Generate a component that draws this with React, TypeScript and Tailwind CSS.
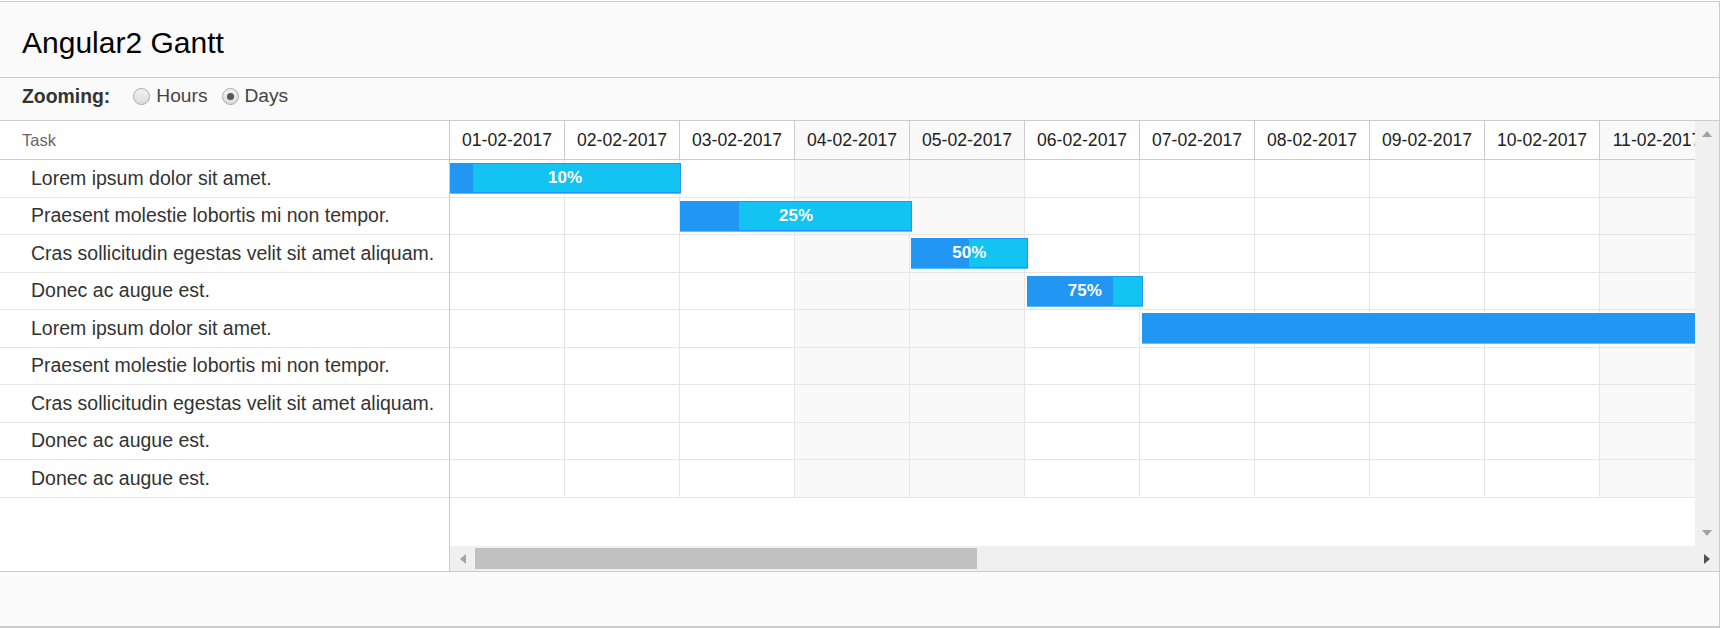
import { useState } from 'react';

// Gantt task row
type Task = {
  name: string;
  start?: number;
  days?: number;
  progress?: number;
  label?: string;
};

const dates: string[] = [
  '01-02-2017', '02-02-2017', '03-02-2017', '04-02-2017', '05-02-2017', '06-02-2017',
  '07-02-2017', '08-02-2017', '09-02-2017', '10-02-2017', '11-02-2017',
];

// sat/sun columns get a grey background
const weekend = [3, 4, 10];

const tasks: Task[] = [
  { name: 'Lorem ipsum dolor sit amet.', start: 0, days: 2, progress: 10, label: '10%' },
  { name: 'Praesent molestie lobortis mi non tempor.', start: 2, days: 2, progress: 25, label: '25%' },
  { name: 'Cras sollicitudin egestas velit sit amet aliquam.', start: 4, days: 1, progress: 50, label: '50%' },
  { name: 'Donec ac augue est.', start: 5, days: 1, progress: 75, label: '75%' },
  { name: 'Lorem ipsum dolor sit amet.', start: 6, days: 12, progress: 100 },
  { name: 'Praesent molestie lobortis mi non tempor.' },
  { name: 'Cras sollicitudin egestas velit sit amet aliquam.' },
  { name: 'Donec ac augue est.' },
  { name: 'Donec ac augue est.' },
];

const BAR_DAY = 115.5;

const Radio: React.FC<{ checked: boolean; label: string; onClick: () => void }> = ({ checked, label, onClick }) => (
  <label onClick={onClick} className="flex items-center cursor-pointer">
    <span className="w-[17px] h-[17px] rounded-full border border-[#a9a9a9] bg-gradient-to-b from-[#f2f2f2] to-[#dcdcdc] flex items-center justify-center">
      {checked && <span className="w-[7px] h-[7px] rounded-full bg-[#555]" />}
    </span>
    <span className="ml-[6px] text-[19.2px] text-[#444]">{label}</span>
  </label>
);

const Bar: React.FC<{ task: Task }> = ({ task }) => {
  if (task.start === undefined || task.days === undefined) return null;
  const left = task.start * BAR_DAY - 1;
  const width = task.days * BAR_DAY + 1;
  return (
    <div
      className="absolute top-[3px] h-[30px] border border-[#2196f3] bg-[#13c3f2] shadow-[0_1px_0_#5bc0ff]"
      style={{ left: left, width: width }}
    >
      <div className="h-full bg-[#2196f3]" style={{ width: `${task.progress}%` }} />
      {task.label && (
        <div className="absolute inset-0 flex items-center justify-center text-white text-[17px] font-bold">{task.label}</div>
      )}
    </div>
  );
};

const App: React.FC = () => {
  const [zoom, setZoom] = useState<'hours' | 'days'>('days');

  return (
    <div className="w-[1720px] h-[628px] bg-white pt-px font-['Liberation_Sans',Arial,sans-serif] overflow-hidden">
      <div className="h-[627px] border-t border-r border-b-2 border-[#cccccc] flex flex-col">
        {/* title */}
        <div className="h-[76px] shrink-0 bg-[#fafafa] border-b border-[#cccccc] flex items-center pt-[5px] px-[22px]">
          <h1 className="text-[30px] text-black">Angular2 Gantt</h1>
        </div>

        {/* zoom switch */}
        <div className="h-[43px] shrink-0 bg-[#fafafa] border-b border-[#cccccc] flex items-center pb-[5px] px-[22px]">
          <span className="text-[19.4px] font-bold text-[#333]">Zooming:</span>
          <div className="ml-[23px] flex items-center gap-[14px]">
            <Radio checked={zoom === 'hours'} label="Hours" onClick={() => setZoom('hours')} />
            <Radio checked={zoom === 'days'} label="Days" onClick={() => setZoom('days')} />
          </div>
        </div>

        {/* gantt */}
        <div className="h-[451px] shrink-0 border-b border-[#cccccc] flex">
          {/* task list */}
          <div className="w-[450px] shrink-0 border-r border-[#cccccc] flex flex-col">
            <div className="h-[39px] shrink-0 border-b border-[#cccccc] flex items-center pl-[22px] text-[16.5px] text-[#666]">Task</div>
            {tasks.map((task, index) => (
              <div key={index} className="h-[37.5px] shrink-0 border-b border-[#e6e6e6] flex items-center pl-[31px] text-[19.5px] text-[#333] whitespace-nowrap">
                {task.name}
              </div>
            ))}
          </div>

          {/* chart */}
          <div className="w-[1269px] shrink-0 flex flex-col">
            <div className="h-[425px] flex">
              <div className="w-[1245px] overflow-hidden">
                <div className="w-[1265px]">
                  <div className="h-[39px] flex border-b border-[#cccccc]">
                    {dates.map((d, i) => (
                      <div
                        key={d}
                        className={`w-[115px] shrink-0 border-r border-[#cccccc] flex items-center justify-center text-[17.6px] text-[#222] ${weekend.includes(i) ? 'bg-[#f9f9f9]' : 'bg-white'}`}
                      >
                        {d}
                      </div>
                    ))}
                  </div>
                  {tasks.map((task, index) => (
                    <div key={index} className="relative h-[37.5px] flex border-b border-[#e6e6e6]">
                      {dates.map((d, i) => (
                        <div
                          key={d}
                          className={`w-[115px] shrink-0 border-r border-[#e6e6e6] ${weekend.includes(i) ? 'bg-[#f9f9f9]' : 'bg-white'}`}
                        />
                      ))}
                      <Bar task={task} />
                    </div>
                  ))}
                </div>
              </div>
              {/* vertical scrollbar */}
              <div className="w-[24px] shrink-0 bg-[#f0f0f0] flex flex-col items-center justify-between pt-[10px] pb-[10px]">
                <svg width="10" height="6" viewBox="0 0 10 6"><polygon points="5,0 10,6 0,6" fill="#a3a3a3" /></svg>
                <svg width="10" height="6" viewBox="0 0 10 6"><polygon points="0,0 10,0 5,6" fill="#a3a3a3" /></svg>
              </div>
            </div>
            {/* horizontal scrollbar */}
            <div className="h-[25px] bg-[#f0f0f0] flex items-center">
              <div className="w-[25px] flex justify-center">
                <svg width="6" height="10" viewBox="0 0 6 10"><polygon points="6,0 6,10 0,5" fill="#a3a3a3" /></svg>
              </div>
              <div className="w-[502px] h-[21px] bg-[#c1c1c1]" />
              <div className="flex-1" />
              <div className="w-[24px] flex justify-center">
                <svg width="6" height="10" viewBox="0 0 6 10"><polygon points="0,0 6,5 0,10" fill="#505050" /></svg>
              </div>
            </div>
          </div>
        </div>

        {/* footer */}
        <div className="flex-1 bg-[#fafafa]" />
      </div>
    </div>
  );
};

export default App;
